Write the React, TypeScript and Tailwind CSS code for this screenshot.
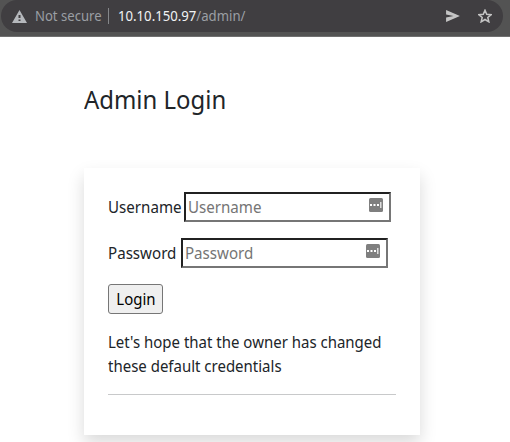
import React from 'react';

function FillIcon() {
  return (
    <svg width="14" height="14" viewBox="0 0 14 14" className="mt-[4px] mr-[6px] shrink-0">
      <rect width="14" height="14" rx="1.5" fill="#7f7f7f" />
      <path d="M1 6h2v2H1zM4.500 6h2v2h-2zM8 6h2v2H8z" fill="#fff" />
      <path d="M11 4h1.500v6H11z" fill="#ddd" />
    </svg>
  );
}

function Field({ label, type, labelWidth }: { label: string; type: string; labelWidth: string }) {
  return (
    <label className="flex h-[30px] items-center">
      <span className={`${labelWidth} shrink-0`}>
        <span className="inline-block origin-left scale-x-[0.945] whitespace-nowrap">{label}</span>
      </span>
      <span className="flex h-[30px] w-[207px] items-start border-2 border-t-[#212121] border-l-[#212121] border-r-[#767676] border-b-[#767676]">
        <input
          type={type}
          placeholder={label}
          className="h-[26px] min-w-0 flex-1 origin-left scale-x-[0.945] pl-[2px] outline-none placeholder:text-[#757575]"
        />
        <FillIcon />
      </span>
    </label>
  );
}

export default function App() {
  return (
    <div className="h-[442px] w-[510px] overflow-hidden bg-white font-['Noto_Sans',sans-serif] text-[16px] leading-6 text-[#212529]">
      <header className="h-[37px] border-b border-[#707070] bg-[#535353] pl-px">
        <div className="flex h-8 w-[502px] items-center rounded-full bg-[#403e41] pl-[11px] text-[14px] text-[#9b9fa4]">
          <svg width="15" height="13" viewBox="0 0 15 13" className="shrink-0">
            <path fillRule="evenodd" d="M7.500 0 15 13H0zM6.500 5v3h2V5zm0 4.500V11h2V9.500z" fill="#b5b8bc" />
          </svg>
          <span className="ml-[8px] w-[73px]">
            <span className="inline-block origin-left scale-x-[0.935] whitespace-nowrap">Not secure</span>
          </span>
          <span className="h-4 w-px bg-[#85878a]" />
          <span className="ml-[9px] flex-1">
            <span className="inline-block origin-left scale-x-[0.94] whitespace-nowrap">
              <span className="text-[#f1f3f4]">10.10.150.97</span>/admin/
            </span>
          </span>
          <svg width="14" height="12" viewBox="0 0 15 13" className="mr-[18px] shrink-0">
            <path d="M0 0 15 6.500 0 13V8l8-1.500L0 5z" fill="#c4c4c4" />
          </svg>
          <svg width="14" height="14" viewBox="1 1 22 22" className="mr-[11px] shrink-0">
            <path d="m12 3 2.700 6.300 6.900.6-5.200 4.500 1.600 6.700-6-3.600-6 3.600 1.600-6.700-5.200-4.500 6.900-.6z" fill="none" stroke="#c4c4c4" strokeWidth="2.400" />
          </svg>
        </div>
      </header>
      <main className="ml-[84px] w-[336px] pt-[47px]">
        <h1 className="origin-left scale-x-[0.92] text-[26px] leading-[30px]">Admin Login</h1>
        <section className="mt-[54px] flex h-[267px] flex-col gap-4 bg-white p-6 shadow-[0_8px_16px_rgba(0,0,0,0.15)]">
          <Field label="Username" type="text" labelWidth="w-[76px]" />
          <Field label="Password" type="password" labelWidth="w-[73px]" />
          <button className="flex h-[30px] w-[55px] items-center justify-center rounded-[3px] border border-[#767676] bg-[#efefef] text-black">
            <span className="scale-x-[0.935]">Login</span>
          </button>
          <p className="origin-left scale-x-[0.937] whitespace-nowrap">
            Let&apos;s hope that the owner has changed
            <br />
            these default credentials
          </p>
          <hr className="h-px border-0 bg-[#c8c9ca]" />
        </section>
      </main>
    </div>
  );
}
